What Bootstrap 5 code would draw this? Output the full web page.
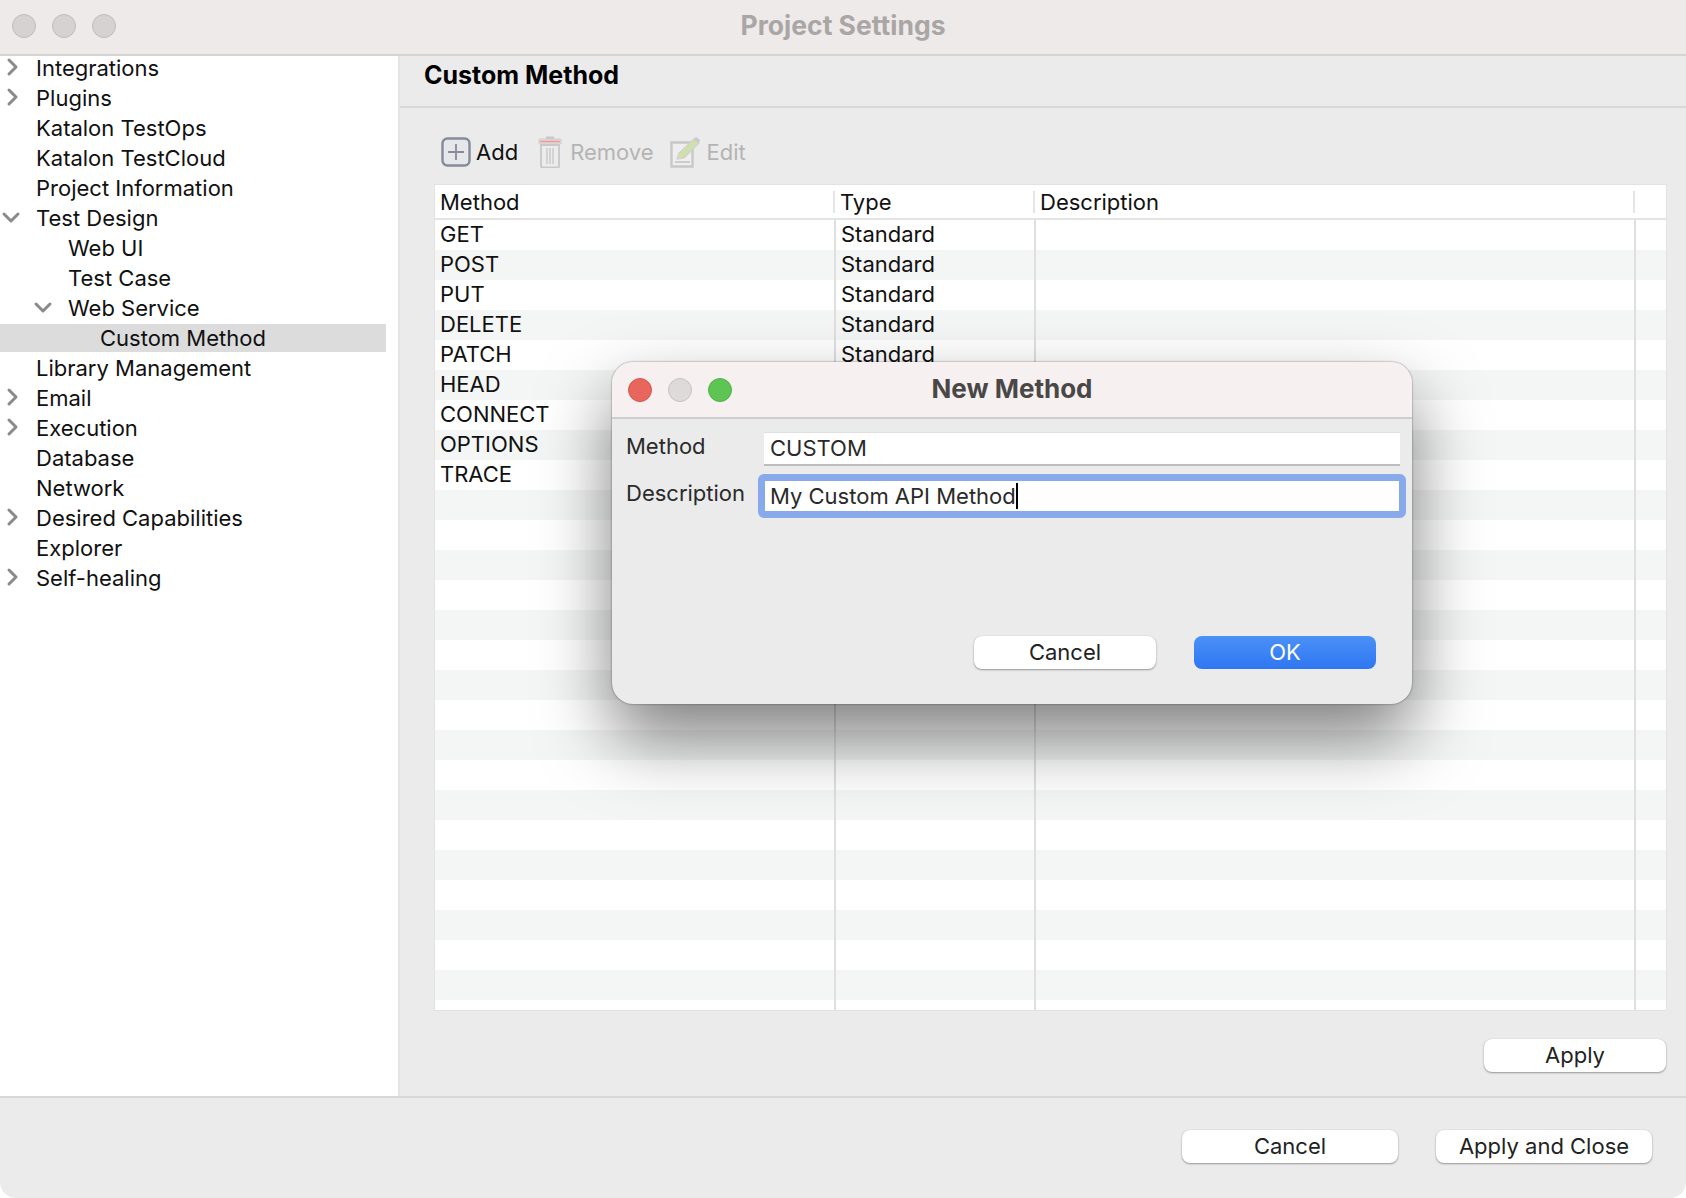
<!DOCTYPE html>
<html lang="en">
<head>
<meta charset="utf-8">
<title>Project Settings</title>
<link href="https://cdn.jsdelivr.net/npm/bootstrap@5.3.0/dist/css/bootstrap.min.css" rel="stylesheet">
<style>
html,body{height:100%;background:#fff;margin:0}
body{font-family:Inter,"Liberation Sans",sans-serif;font-size:22px;color:#111;overflow:hidden;line-height:30px}
.win{width:1686px;height:1198px;position:relative;background:#ebebeb;border-radius:0 0 16px 16px;overflow:hidden}
.titlebar{height:56px;background:#eeeae9;border-bottom:2px solid #d4d3d2;position:relative;flex:none}
.titletext{font-weight:700;font-size:26.5px;color:#a9a6a5;line-height:50px;text-align:center}
.light{width:24px;height:24px;border-radius:50%;background:#d6d2d1;border:1px solid #bfbcbb;flex:none}
.lights{position:absolute;left:12px;top:14px;gap:16px}
.mid{height:1040px;flex:none}
.side{width:398px;background:#fff;flex:none}
.tree{margin-top:-3px}
.tree-row{height:30px;position:relative;white-space:nowrap;margin:0;padding:0;line-height:30px;display:flex;align-items:center}
.l0{padding-left:36px}.l1{padding-left:68px}.l2{padding-left:100px}
.tree-row.sel{background:#dcdcdc;width:386px;height:28px;margin:1px 0}
.chev{position:absolute;width:20px;height:20px;top:4px;fill:none;stroke:#8a8a8a;stroke-width:3;stroke-linecap:round;stroke-linejoin:round}
.panel{flex:1;min-width:0;border-left:2px solid #e4e4e4}
.headbar{height:52px;border-bottom:2px solid #d8d8d8;padding-left:24px;font-weight:700;font-size:25px;line-height:38px;color:#000}
.tools{height:76px;padding:12px 0 0 41px}
.tool{display:flex;align-items:center}
.tool.off{color:#b4b4b4}
.g5a{gap:5px}.g8{gap:8px}.g5{gap:5px}
.mr20{margin-right:20px}.mr16{margin-right:16px}
.tabbox{width:1233px;height:827px;margin-left:34px;background:#fff;border:1px solid #e2e2e2;overflow:hidden}
.mt{table-layout:fixed;width:1232px;border-collapse:collapse;margin:0}
.mt th,.mt td{padding:0 0 1px 5px;height:30px;font-weight:400;line-height:29px;color:#111;border-right:2px solid #dfdfdf}
.mt th{height:34px;padding:1px 0 0 5px;border-bottom:2px solid #e4e4e4;border-right:none;position:relative}
.mt th:not(:last-child)::after{content:"";position:absolute;right:0;top:6px;bottom:5px;width:2px;background:#e5e5e5}
.mt td:last-child{border-right:none}
.mt tbody tr:nth-child(even) td{background:#f4f5f5}
.applyrow{padding:28px 20px 0 0}
.mbtn{background:#fff;border:none;border-radius:8px;height:33px;padding:0;font-size:22px;line-height:33px;color:#222;box-shadow:0 1px 2px rgba(0,0,0,.35),0 0 1px rgba(0,0,0,.2)}
.mbtn:hover{background:#fff;color:#222}
.w182{width:182px}.w216{width:216px}
.foot{flex:1;border-top:2px solid #d8d8d8;padding:32px 34px 0 0;gap:38px}
.dlg{position:absolute;left:612px;top:362px;width:800px;height:342px;background:#ebebeb;border-radius:21px;box-shadow:0 34px 70px rgba(0,0,0,.5),0 0 2px rgba(0,0,0,.55);overflow:hidden;color:#2a2a2a}
.dlghead{height:57px;background:#f6f1f0;border-bottom:2px solid #cfcdcc;position:relative}
.dlgtitle{font-weight:700;font-size:26px;line-height:54px;text-align:center;color:#4a4747}
.dlights{position:absolute;left:16px;top:16px;gap:16px}
.dred{background:#e8665c;border-color:#d5574e}.dgrey{background:#dfdada;border-color:#c6c2c2}.dgreen{background:#5ec454;border-color:#52b049}
.flabel{position:absolute;left:14px}
.finput.form-control{position:absolute;left:152px;width:636px;height:34px;top:70px;border:none;border-radius:0;border-top:1px solid #e0e0e0;border-bottom:2px solid #bdbdbd;background:#fff;padding:0 6px 2px;font-size:22px;line-height:30px;color:#2a2a2a;box-shadow:none}
.focusbox{position:absolute;left:146px;top:112px;width:648px;height:44px;border:7px solid #88a9ea;border-radius:6px;background:#fff;padding-left:5px;line-height:30px;color:#2a2a2a;white-space:nowrap}
.caret-mark{display:inline-block;width:2px;height:26px;background:#000;vertical-align:-5px}
.btnok,.btnok:hover{background:linear-gradient(#4a91f8,#2f76f2);color:#fff;box-shadow:none}
.dbtns{position:absolute;top:274px;left:362px;gap:38px}
</style>
</head>
<body>
<div class="win d-flex flex-column">
  <div class="titlebar">
    <div class="lights d-flex"><span class="light"></span><span class="light"></span><span class="light"></span></div>
    <div class="titletext">Project Settings</div>
  </div>
  <div class="mid d-flex">
    <div class="side"><div class="tree">
      <div class="tree-row l0"><svg class="chev" style="left:2px" viewBox="0 0 20 20"><path d="M7 3l7 7-7 7"/></svg>Integrations</div>
      <div class="tree-row l0"><svg class="chev" style="left:2px" viewBox="0 0 20 20"><path d="M7 3l7 7-7 7"/></svg>Plugins</div>
      <div class="tree-row l0">Katalon TestOps</div>
      <div class="tree-row l0">Katalon TestCloud</div>
      <div class="tree-row l0">Project Information</div>
      <div class="tree-row l0"><svg class="chev" style="left:1px" viewBox="0 0 20 20"><path d="M3 7l7 7 7-7"/></svg>Test Design</div>
      <div class="tree-row l1">Web UI</div>
      <div class="tree-row l1">Test Case</div>
      <div class="tree-row l1"><svg class="chev" style="left:33px" viewBox="0 0 20 20"><path d="M3 7l7 7 7-7"/></svg>Web Service</div>
      <div class="tree-row l2 sel">Custom Method</div>
      <div class="tree-row l0">Library Management</div>
      <div class="tree-row l0"><svg class="chev" style="left:2px" viewBox="0 0 20 20"><path d="M7 3l7 7-7 7"/></svg>Email</div>
      <div class="tree-row l0"><svg class="chev" style="left:2px" viewBox="0 0 20 20"><path d="M7 3l7 7-7 7"/></svg>Execution</div>
      <div class="tree-row l0">Database</div>
      <div class="tree-row l0">Network</div>
      <div class="tree-row l0"><svg class="chev" style="left:2px" viewBox="0 0 20 20"><path d="M7 3l7 7-7 7"/></svg>Desired Capabilities</div>
      <div class="tree-row l0">Explorer</div>
      <div class="tree-row l0"><svg class="chev" style="left:2px" viewBox="0 0 20 20"><path d="M7 3l7 7-7 7"/></svg>Self-healing</div>
    </div></div>
    <div class="panel">
      <div class="headbar">Custom Method</div>
      <div class="tools d-flex align-items-center">
        <div class="tool g5a mr20">
          <svg width="30" height="30" viewBox="0 0 30 30"><rect x="1.5" y="1.5" width="27" height="27" rx="5" fill="#e6e7ea" stroke="#858b98" stroke-width="2.4"/><path d="M15 7v16M7 15h16" stroke="#858b98" stroke-width="1.8"/></svg>
          <span>Add</span>
        </div>
        <div class="tool off g8 mr16">
          <svg width="24" height="32" viewBox="0 0 24 32"><rect x="8" y="0.5" width="8" height="3" fill="#c8c8c8"/><rect x="1" y="3" width="22" height="5" rx="1" fill="#e6e6e6" stroke="#c8c8c8"/><rect x="2" y="4.5" width="20" height="2" fill="#ee9d9d"/><path d="M3 9h18v21a1.5 1.5 0 0 1-1.5 1.5h-15A1.5 1.5 0 0 1 3 30z" fill="#ececec" stroke="#c8c8c8" stroke-width="1.8"/><path d="M9 12v16M12 12v16M15 12v16" stroke="#c8c8c8" stroke-width="1.4"/></svg>
          <span>Remove</span>
        </div>
        <div class="tool off g5">
          <svg width="32" height="32" viewBox="0 0 32 32"><path d="M1.5 6.5h21v24h-21z" fill="#eee" stroke="#c8c8c8" stroke-width="2.4"/><path d="M5 26h15" stroke="#c8c8c8" stroke-width="1.8"/><path d="M7 23l2-6L24 3l5 4-15 15z" fill="#cfe0aa" stroke="#d0d0d0" stroke-width="1.2"/><path d="M24 3l2-2 4 3-1 3z" fill="#c8c8c8"/></svg>
          <span>Edit</span>
        </div>
      </div>
      <div class="tabbox">
        <table class="mt">
          <colgroup><col style="width:400px"><col style="width:200px"><col style="width:600px"><col></colgroup>
          <thead><tr><th>Method</th><th>Type</th><th>Description</th><th></th></tr></thead>
          <tbody>
            <tr><td>GET</td><td>Standard</td><td></td><td></td></tr>
            <tr><td>POST</td><td>Standard</td><td></td><td></td></tr>
            <tr><td>PUT</td><td>Standard</td><td></td><td></td></tr>
            <tr><td>DELETE</td><td>Standard</td><td></td><td></td></tr>
            <tr><td>PATCH</td><td>Standard</td><td></td><td></td></tr>
            <tr><td>HEAD</td><td>Standard</td><td></td><td></td></tr>
            <tr><td>CONNECT</td><td>Standard</td><td></td><td></td></tr>
            <tr><td>OPTIONS</td><td>Standard</td><td></td><td></td></tr>
            <tr><td>TRACE</td><td>Standard</td><td></td><td></td></tr>
            <tr><td></td><td></td><td></td><td></td></tr><tr><td></td><td></td><td></td><td></td></tr>
            <tr><td></td><td></td><td></td><td></td></tr><tr><td></td><td></td><td></td><td></td></tr>
            <tr><td></td><td></td><td></td><td></td></tr><tr><td></td><td></td><td></td><td></td></tr>
            <tr><td></td><td></td><td></td><td></td></tr><tr><td></td><td></td><td></td><td></td></tr>
            <tr><td></td><td></td><td></td><td></td></tr><tr><td></td><td></td><td></td><td></td></tr>
            <tr><td></td><td></td><td></td><td></td></tr><tr><td></td><td></td><td></td><td></td></tr>
            <tr><td></td><td></td><td></td><td></td></tr><tr><td></td><td></td><td></td><td></td></tr>
            <tr><td></td><td></td><td></td><td></td></tr><tr><td></td><td></td><td></td><td></td></tr>
            <tr><td></td><td></td><td></td><td></td></tr><tr><td></td><td></td><td></td><td></td></tr>
            <tr><td></td><td></td><td></td><td></td></tr>
          </tbody>
        </table>
      </div>
      <div class="applyrow d-flex justify-content-end"><button class="btn mbtn w182" type="button">Apply</button></div>
    </div>
  </div>
  <div class="foot d-flex justify-content-end">
    <button class="btn mbtn w216" type="button">Cancel</button>
    <button class="btn mbtn w216" type="button">Apply and Close</button>
  </div>

  <div class="dlg">
    <div class="dlghead">
      <div class="dlights d-flex"><span class="light dred"></span><span class="light dgrey"></span><span class="light dgreen"></span></div>
      <div class="dlgtitle">New Method</div>
    </div>
    <span class="flabel" style="top:69px">Method</span>
    <input class="form-control finput" type="text" value="CUSTOM">
    <span class="flabel" style="top:116px">Description</span>
    <div class="focusbox">My Custom API Method<span class="caret-mark"></span></div>
    <div class="dbtns d-flex">
      <button class="btn mbtn w182" type="button">Cancel</button>
      <button class="btn mbtn w182 btnok" type="button">OK</button>
    </div>
  </div>
</div>
</body>
</html>
